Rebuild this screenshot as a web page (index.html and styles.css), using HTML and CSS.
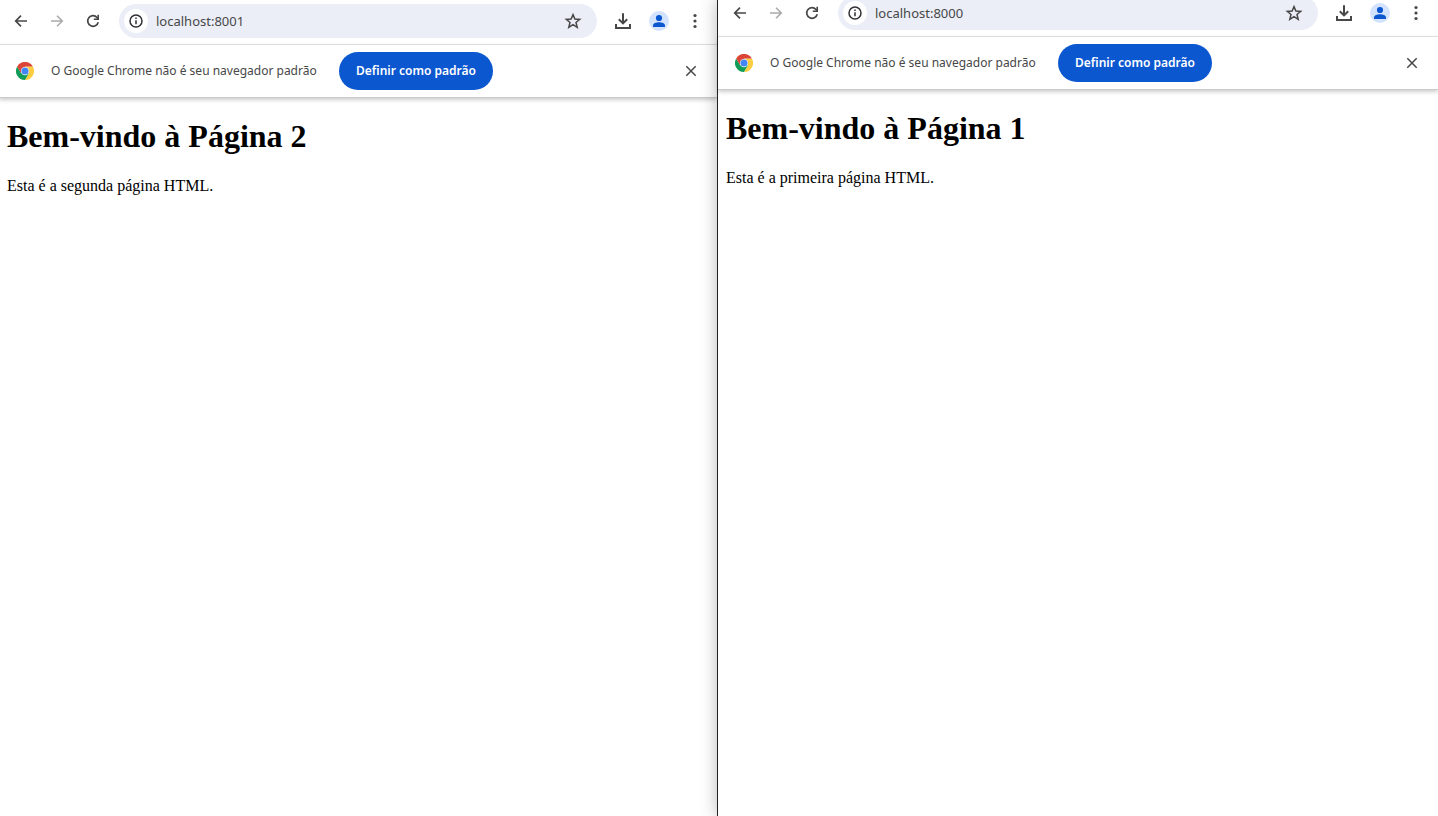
FILE: index.html
```html
<!DOCTYPE html>
<html lang="pt-BR">
<head>
<meta charset="utf-8">
<title>localhost</title>
<link rel="stylesheet" href="styles.css">
</head>
<body>
<svg class="sprite" aria-hidden="true">
  <symbol id="back" viewBox="0 0 16 16"><path d="M14 8H3M8 2.700 2.700 8 8 13.300" fill="none" stroke="currentColor" stroke-width="1.700"/></symbol>
  <symbol id="forward" viewBox="0 0 16 16"><path d="M2 8h11M8 2.700 13.300 8 8 13.300" fill="none" stroke="currentColor" stroke-width="1.600"/></symbol>
  <symbol id="reload" viewBox="0 0 16 16"><path d="M13.200 9.200A5.300 5.300 0 1 1 12 4.500L13 5.600" fill="none" stroke="currentColor" stroke-width="1.700"/><path d="M14 1.800V7H8.800V5.400h3.600V1.800z" fill="currentColor"/></symbol>
  <symbol id="info" viewBox="0 0 16 16"><circle cx="8" cy="8" r="6" fill="none" stroke="currentColor" stroke-width="1.500"/><path d="M8 7.200V11.300M8 4.600V6.100" stroke="currentColor" stroke-width="1.500"/></symbol>
  <symbol id="star" viewBox="0 0 18 18"><path d="M9 2.600 10.900 7 15.700 7.400 12 10.500 13.200 15.300 9 12.700 4.800 15.300 6 10.500 2.300 7.400 7.100 7z" fill="none" stroke="currentColor" stroke-width="1.500"/></symbol>
  <symbol id="download" viewBox="0 0 18 18"><path d="M9 1.200V11M4.800 7.200 9 11.400 13.200 7.200M2 12V15.900H16V12" fill="none" stroke="currentColor" stroke-width="2"/></symbol>
  <symbol id="person" viewBox="0 0 20 20"><circle cx="10" cy="10" r="10" fill="#d3e3fd"/><circle cx="10" cy="7" r="3.100" fill="#0b57d0"/><path d="M4 16V14.300C4 12.400 7.200 11.200 10 11.200S16 12.400 16 14.300V16z" fill="#0b57d0"/></symbol>
  <symbol id="dots" viewBox="0 0 16 16"><g fill="currentColor"><circle cx="8" cy="2.500" r="1.600"/><circle cx="8" cy="8" r="1.600"/><circle cx="8" cy="13.500" r="1.600"/></g></symbol>
  <symbol id="close" viewBox="0 0 16 16"><path d="M3.300 3.300 12.700 12.700M12.700 3.300 3.300 12.700" stroke="currentColor" stroke-width="1.500"/></symbol>
  <symbol id="chrome" viewBox="0 0 48 48">
    <path d="M24 12H44.800A24 24 0 0 1 24 48L34.400 30z" fill="#ffcd40"/>
    <path d="M13.600 30 3.200 12A24 24 0 0 0 24 48L34.400 30z" fill="#0f9d58"/>
    <path d="M24 12H44.800A24 24 0 0 0 3.200 12L13.600 30z" fill="#db4437"/>
    <circle cx="24" cy="24" r="11" fill="#fff"/><circle cx="24" cy="24" r="9.500" fill="#4285f4"/>
  </symbol>
</svg>
<main class="desktop">
  <section class="window window-back" aria-label="Página 2">
    <div class="window-body">
      <nav class="toolbar" aria-label="Navegação">
        <button class="tool" aria-label="Voltar"><svg class="icon"><use href="#back"/></svg></button>
        <button class="tool" aria-label="Avançar" disabled><svg class="icon"><use href="#forward"/></svg></button>
        <button class="tool" aria-label="Recarregar"><svg class="icon"><use href="#reload"/></svg></button>
        <div class="address">
          <button class="site-info" aria-label="Informações do site"><svg class="icon"><use href="#info"/></svg></button>
          <input class="url" type="text" aria-label="Endereço" value="localhost:8001">
          <button class="tool" aria-label="Favoritar"><svg class="icon icon-medium"><use href="#star"/></svg></button>
        </div>
        <button class="tool" aria-label="Downloads"><svg class="icon icon-medium"><use href="#download"/></svg></button>
        <button class="tool" aria-label="Perfil"><svg class="icon icon-large"><use href="#person"/></svg></button>
        <button class="tool" aria-label="Menu"><svg class="icon"><use href="#dots"/></svg></button>
      </nav>
      <div class="infobar">
        <svg class="chrome-logo" aria-hidden="true"><use href="#chrome"/></svg>
        <span class="message">O Google Chrome não é seu navegador padrão</span>
        <button class="set-default">Definir como padrão</button>
        <button class="tool dismiss" aria-label="Fechar"><svg class="icon"><use href="#close"/></svg></button>
      </div>
      <article class="page">
        <h1 class="title">Bem-vindo à Página 2</h1>
        <p class="text">Esta é a segunda página HTML.</p>
      </article>
    </div>
  </section>
  <section class="window window-front" aria-label="Página 1">
    <div class="window-body">
      <nav class="toolbar" aria-label="Navegação">
        <button class="tool" aria-label="Voltar"><svg class="icon"><use href="#back"/></svg></button>
        <button class="tool" aria-label="Avançar" disabled><svg class="icon"><use href="#forward"/></svg></button>
        <button class="tool" aria-label="Recarregar"><svg class="icon"><use href="#reload"/></svg></button>
        <div class="address">
          <button class="site-info" aria-label="Informações do site"><svg class="icon"><use href="#info"/></svg></button>
          <input class="url" type="text" aria-label="Endereço" value="localhost:8000">
          <button class="tool" aria-label="Favoritar"><svg class="icon icon-medium"><use href="#star"/></svg></button>
        </div>
        <button class="tool" aria-label="Downloads"><svg class="icon icon-medium"><use href="#download"/></svg></button>
        <button class="tool" aria-label="Perfil"><svg class="icon icon-large"><use href="#person"/></svg></button>
        <button class="tool" aria-label="Menu"><svg class="icon"><use href="#dots"/></svg></button>
      </nav>
      <div class="infobar">
        <svg class="chrome-logo" aria-hidden="true"><use href="#chrome"/></svg>
        <span class="message">O Google Chrome não é seu navegador padrão</span>
        <button class="set-default">Definir como padrão</button>
        <button class="tool dismiss" aria-label="Fechar"><svg class="icon"><use href="#close"/></svg></button>
      </div>
      <article class="page">
        <h1 class="title">Bem-vindo à Página 1</h1>
        <p class="text">Esta é a primeira página HTML.</p>
      </article>
    </div>
  </section>
</main>
</body>
</html>
```

FILE: styles.css
```css
* { box-sizing: border-box; }

body {
  margin: 0;
  background: #fff;
  color: #000;
  font-family: "Liberation Serif", serif;
}

.sprite { display: none; }

.desktop {
  display: grid;
  grid-template-columns: 717fr 721fr;
  min-height: 100vh;
  overflow: hidden;
}

.window {
  display: flex;
  flex-direction: column;
  min-width: 0;
  background: #fff;
}

/* The front window casts its shadow over the one behind it. */
.window-front {
  z-index: 1;
  border-left: 1px solid #202124;
  box-shadow: 0 0 16px rgba(0, 0, 0, 0.28);
}

/* Both windows run slightly past the edge of the screen. */
.window-back .window-body { margin-left: -1px; }
.window-front .window-body { margin-top: -8px; }

.toolbar {
  display: flex;
  align-items: center;
  gap: 8px;
  padding: 4px 8px 6px;
  border-bottom: 1px solid #dfe1e2;
}

.tool,
.site-info {
  display: flex;
  flex: none;
  align-items: center;
  justify-content: center;
  width: 28px;
  height: 28px;
  padding: 0;
  border: 0;
  border-radius: 50%;
  background: none;
  color: #474747;
}

.tool:disabled { color: #ababab; }

.icon { width: 16px; height: 16px; }
.icon-medium { width: 18px; height: 18px; }
.icon-large { width: 20px; height: 20px; }

.address {
  display: flex;
  flex: 1;
  align-items: center;
  min-width: 0;
  height: 34px;
  margin: 0 4px;
  padding: 0 10px 0 5px;
  border-radius: 17px;
  background: #ebeef7;
}

.site-info {
  width: 24px;
  height: 24px;
  background: #fff;
  color: #303134;
}

.url {
  flex: 1;
  min-width: 0;
  padding: 0 8px;
  border: 0;
  background: none;
  color: #474747;
  font: 13px/20px "Noto Sans", sans-serif;
}

.infobar {
  display: flex;
  align-items: center;
  padding: 7px 12px 7px 17px;
  border-bottom: 1px solid #c8cbcc;
  box-shadow: 0 2px 4px rgba(0, 0, 0, 0.2);
  color: #474747;
  font: 12px/20px "Noto Sans", sans-serif;
}

.chrome-logo {
  flex: none;
  width: 18px;
  height: 18px;
  margin-right: 17px;
}

.message {
  min-width: 272px;
  white-space: nowrap;
}

.set-default {
  height: 38px;
  min-width: 154px;
  margin-left: 16px;
  padding: 0 16px;
  border: 0;
  border-radius: 19px;
  background: #0b57d0;
  color: #fff;
  font: 600 12px/20px "Noto Sans", sans-serif;
  white-space: nowrap;
}

.dismiss { margin-left: auto; }

.page { padding: 0 8px; }

.title {
  margin: 20px 0;
  font-size: 32px;
  line-height: 36px;
}

.text {
  margin: 0;
  font-size: 16px;
  line-height: 24px;
}
```
